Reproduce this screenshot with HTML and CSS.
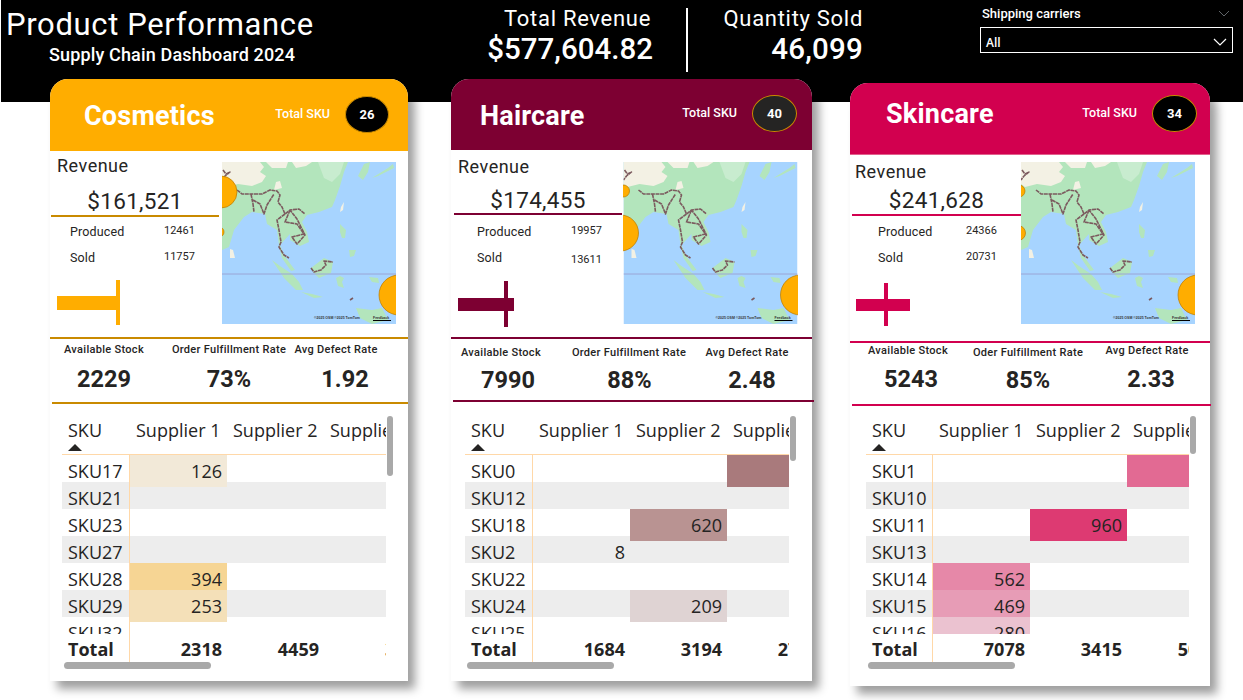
FILE: index.html
```html
<!DOCTYPE html>
<html lang="en">
<head>
  <meta charset="UTF-8">
  <meta name="viewport" content="width=device-width, initial-scale=1.0">
  <title>Product Performance</title>
  <link rel="stylesheet" href="styles.css">
</head>
<body>
  <!-- shared base map, each card adds its own bubbles on top -->
  <svg class="defs" width="0" height="0" aria-hidden="true">
    <filter id="soft"><feGaussianBlur stdDeviation="0.35"/></filter>
    <symbol id="basemap" viewBox="0 0 174 162">
      <rect width="174" height="162" fill="#a7d4ff"/>
      <g filter="url(#soft)">
        <path d="M0 0H126L122 10L118 24L113 38L110 45L97 50L85 53L80 60L85 70L87 80L78 84L68 78L68 72L58 83L62 93L67 100L73 108L69 109L60 96L57 83L55 68L45 62L43 52L30 50L22 55L12 68L7 85L0 88Z" fill="#b3e5bc"/>
        <path d="M0 0H38L42 5L38 10L44 14L40 20L30 24L16 22L4 25L0 22Z M44 0H66L64 6L50 6Z M70 0H90L84 4L74 6Z" fill="#f3f1e4"/>
        <path d="M54 20L58 19L60 26L52 28Z" fill="#f3f1e4"/>
        <path d="M96 0H122L118 12L110 20L102 16Z" fill="#c8eccf"/>
        <path d="M50 98L58 104L70 112L77 120L81 128L74 128L62 116Z M89 106L102 96L111 100L109 111L97 116L92 111Z M79 130L90 132L101 135L92 136Z M114 116L118 114L122 116L120 120L122 126L116 124Z M118 62L124 68L123 76L120 76L118 70Z M127 88L134 88L132 94L128 95Z M147 115L156 116L157 121L150 120Z M134 146L150 148L160 146L166 158L150 162L138 156Z M136 14L142 2L148 0L146 10L141 18Z M150 16L166 6L171 2L172 6L156 14Z" fill="#b3e5bc"/>
        <path d="M119 45L122 40L121 48L118 50Z M8 87L11 88L13 96L8 96Z" fill="#f3f1e4"/>
        <path d="M0 112H174" stroke="#9aa5d6" stroke-width="1"/>
        <g fill="none" stroke="#7b5a5e" stroke-width="1.600" stroke-linejoin="round" stroke-dasharray="4 0.600">
          <path d="M15 28L20 32L28 32L40 32L48 28L55 29L58 33L56 40L60 45L63 52L68 48L77 47L83 52"/>
          <path d="M29 32L31 42L32 50M31 38L38 42L42 52L45 43L52 32"/>
          <path d="M63 52L55 58L57 68L59 80L57 85L62 93L67 96"/>
          <path d="M68 48L63 60L75 62L82 72L70 75L75 82L83 73L78 63L75 57L68 48"/>
          <path d="M89 106L92 110L99 108L104 103L102 99L111 100"/>
          <path d="M1 8L4 12L8 10L3 14L0 18M128 138L131 136"/>
        </g>
      </g>
    </symbol>
  </svg>

  <header class="topbar">
    <div class="title-block">
      <h1>Product Performance</h1>
      <div class="subtitle">Supply Chain Dashboard 2024</div>
    </div>
    <div class="total total-revenue">
      <div class="total-label">Total Revenue</div>
      <div class="total-value">$577,604.82</div>
    </div>
    <div class="total total-qty">
      <div class="total-label">Quantity Sold</div>
      <div class="total-value">46,099</div>
    </div>
    <div class="slicer">
      <div class="slicer-head">
        Shipping carriers
        <svg width="12" height="7" viewBox="0 0 12 7"><path d="M1 1L6 6L11 1" fill="none" stroke="#5f6468" stroke-width="1"/></svg>
      </div>
      <div class="slicer-box">
        All
        <svg width="14" height="8" viewBox="0 0 14 8"><path d="M1 1L7 7L13 1" fill="none" stroke="#fff" stroke-width="1.2"/></svg>
      </div>
    </div>
  </header>

  <main class="cards">

    <section class="card cosmetics">
      <div class="card-head">
        <h2>Cosmetics</h2>
        <span class="sku-label">Total SKU</span>
        <span class="sku-count">26</span>
      </div>
      <div class="summary">
        <div class="summary-left">
          <div class="rev-label">Revenue</div>
          <div class="rev-value">$161,521</div>
          <div class="stat"><span>Produced</span><b>12461</b></div>
          <div class="stat"><span>Sold</span><b>11757</b></div>
          <svg class="bullet" width="66" height="46" viewBox="0 0 66 46">
            <rect x="0" y="16" width="60" height="14" fill="#ffad00"/>
            <rect x="59" y="0" width="4" height="45" fill="#ffad00"/>
          </svg>
        </div>
        <svg class="map" width="174" height="162" viewBox="0 0 174 162">
          <use href="#basemap" width="174" height="162"/>
          <circle class="bubble" cx="-1" cy="30" r="16"/>
          <circle class="bubble" cx="-3" cy="70" r="5"/>
          <circle class="bubble" cx="177" cy="133" r="20"/>
          <text class="map-credit" x="92" y="157">©2025 OSM ©2025 TomTom</text>
          <text class="map-credit" x="151" y="157">Feedback</text>
          <path d="M151 158.500H169" stroke="#000" stroke-width="1"/>
        </svg>
      </div>
      <div class="kpis">
        <div class="kpi"><div class="kpi-label">Available Stock</div><div class="kpi-value">2229</div></div>
        <div class="kpi"><div class="kpi-label">Order Fulfillment Rate</div><div class="kpi-value">73%</div></div>
        <div class="kpi"><div class="kpi-label">Avg Defect Rate</div><div class="kpi-value">1.92</div></div>
      </div>
      <div class="matrix">
        <div class="matrix-clip">
          <div class="row row-head">
            <div class="cell first">SKU<i class="sort"></i></div>
            <div class="cell">Supplier 1</div><div class="cell">Supplier 2</div><div class="cell">Supplier 3</div>
          </div>
          <div class="rows">
            <div class="row"><div class="cell first">SKU17</div><div class="cell num" style="background:#f2e9d8">126</div><div class="cell"></div><div class="cell"></div></div>
            <div class="row"><div class="cell first">SKU21</div><div class="cell"></div><div class="cell"></div><div class="cell"></div></div>
            <div class="row"><div class="cell first">SKU23</div><div class="cell"></div><div class="cell"></div><div class="cell"></div></div>
            <div class="row"><div class="cell first">SKU27</div><div class="cell"></div><div class="cell"></div><div class="cell"></div></div>
            <div class="row"><div class="cell first">SKU28</div><div class="cell num" style="background:#f6d594">394</div><div class="cell"></div><div class="cell"></div></div>
            <div class="row"><div class="cell first">SKU29</div><div class="cell num" style="background:#f4e0b8">253</div><div class="cell"></div><div class="cell"></div></div>
            <div class="row"><div class="cell first">SKU32</div><div class="cell"></div><div class="cell"></div><div class="cell"></div></div>
          </div>
          <div class="row row-total">
            <div class="cell first">Total</div><div class="cell num">2318</div><div class="cell num">4459</div><div class="cell num">367</div>
          </div>
        </div>
        <div class="scroll-v"></div>
        <div class="scroll-h"></div>
      </div>
    </section>

    <section class="card haircare">
      <div class="card-head">
        <h2>Haircare</h2>
        <span class="sku-label">Total SKU</span>
        <span class="sku-count">40</span>
      </div>
      <div class="summary">
        <div class="summary-left">
          <div class="rev-label">Revenue</div>
          <div class="rev-value">$174,455</div>
          <div class="stat"><span>Produced</span><b>19957</b></div>
          <div class="stat"><span>Sold</span><b class="low">13611</b></div>
          <svg class="bullet" width="66" height="46" viewBox="0 0 66 46">
            <rect x="0" y="17" width="56" height="13" fill="#7d0032"/>
            <rect x="46" y="0" width="4" height="46" fill="#7d0032"/>
          </svg>
        </div>
        <svg class="map" width="175" height="162" viewBox="0 0 174 162">
          <use href="#basemap" width="174" height="162"/>
          <circle class="bubble" cx="0" cy="29" r="6"/>
          <circle class="bubble" cx="-3" cy="71" r="18"/>
          <circle class="bubble" cx="177" cy="133" r="20"/>
          <text class="map-credit" x="92" y="157">©2025 OSM ©2025 TomTom</text>
          <text class="map-credit" x="151" y="157">Feedback</text>
          <path d="M151 158.500H169" stroke="#000" stroke-width="1"/>
        </svg>
      </div>
      <div class="kpis">
        <div class="kpi"><div class="kpi-label">Available Stock</div><div class="kpi-value">7990</div></div>
        <div class="kpi"><div class="kpi-label">Order Fulfillment Rate</div><div class="kpi-value">88%</div></div>
        <div class="kpi"><div class="kpi-label">Avg Defect Rate</div><div class="kpi-value">2.48</div></div>
      </div>
      <div class="matrix">
        <div class="matrix-clip">
          <div class="row row-head">
            <div class="cell first">SKU<i class="sort"></i></div>
            <div class="cell">Supplier 1</div><div class="cell">Supplier 2</div><div class="cell">Supplier 3</div>
          </div>
          <div class="rows">
            <div class="row"><div class="cell first">SKU0</div><div class="cell"></div><div class="cell"></div><div class="cell" style="background:#a97a7c"></div></div>
            <div class="row"><div class="cell first">SKU12</div><div class="cell"></div><div class="cell"></div><div class="cell"></div></div>
            <div class="row"><div class="cell first">SKU18</div><div class="cell"></div><div class="cell num" style="background:#b99392">620</div><div class="cell"></div></div>
            <div class="row"><div class="cell first">SKU2</div><div class="cell num">8</div><div class="cell"></div><div class="cell"></div></div>
            <div class="row"><div class="cell first">SKU22</div><div class="cell"></div><div class="cell"></div><div class="cell"></div></div>
            <div class="row"><div class="cell first">SKU24</div><div class="cell"></div><div class="cell num" style="background:#dfd3d3">209</div><div class="cell"></div></div>
            <div class="row"><div class="cell first">SKU25</div><div class="cell"></div><div class="cell"></div><div class="cell"></div></div>
          </div>
          <div class="row row-total">
            <div class="cell first">Total</div><div class="cell num">1684</div><div class="cell num">3194</div><div class="cell num">2748</div>
          </div>
        </div>
        <div class="scroll-v"></div>
        <div class="scroll-h"></div>
      </div>
    </section>

    <section class="card skincare">
      <div class="card-head">
        <h2>Skincare</h2>
        <span class="sku-label">Total SKU</span>
        <span class="sku-count">34</span>
      </div>
      <div class="summary">
        <div class="summary-left">
          <div class="rev-label">Revenue</div>
          <div class="rev-value">$241,628</div>
          <div class="stat"><span>Produced</span><b>24366</b></div>
          <div class="stat"><span>Sold</span><b>20731</b></div>
          <svg class="bullet" width="66" height="46" viewBox="0 0 66 46">
            <rect x="0" y="19" width="54" height="12" fill="#d2004f"/>
            <rect x="28" y="3" width="4" height="43" fill="#d2004f"/>
          </svg>
        </div>
        <svg class="map" width="174" height="162" viewBox="0 0 174 162">
          <use href="#basemap" width="174" height="162"/>
          <circle class="bubble" cx="-2" cy="29" r="6"/>
          <circle class="bubble" cx="-3" cy="71" r="7.500"/>
          <circle class="bubble" cx="177" cy="133" r="20"/>
          <text class="map-credit" x="92" y="157">©2025 OSM ©2025 TomTom</text>
          <text class="map-credit" x="151" y="157">Feedback</text>
          <path d="M151 158.500H169" stroke="#000" stroke-width="1"/>
        </svg>
      </div>
      <div class="kpis">
        <div class="kpi"><div class="kpi-label">Available Stock</div><div class="kpi-value">5243</div></div>
        <div class="kpi"><div class="kpi-label">Oder Fulfillment Rate</div><div class="kpi-value">85%</div></div>
        <div class="kpi"><div class="kpi-label">Avg Defect Rate</div><div class="kpi-value">2.33</div></div>
      </div>
      <div class="matrix">
        <div class="matrix-clip">
          <div class="row row-head">
            <div class="cell first">SKU<i class="sort"></i></div>
            <div class="cell">Supplier 1</div><div class="cell">Supplier 2</div><div class="cell">Supplier 3</div>
          </div>
          <div class="rows">
            <div class="row"><div class="cell first">SKU1</div><div class="cell"></div><div class="cell"></div><div class="cell" style="background:#e26a93"></div></div>
            <div class="row"><div class="cell first">SKU10</div><div class="cell"></div><div class="cell"></div><div class="cell"></div></div>
            <div class="row"><div class="cell first">SKU11</div><div class="cell"></div><div class="cell num" style="background:#dd3a72">960</div><div class="cell"></div></div>
            <div class="row"><div class="cell first">SKU13</div><div class="cell"></div><div class="cell"></div><div class="cell"></div></div>
            <div class="row"><div class="cell first">SKU14</div><div class="cell num" style="background:#e688a8">562</div><div class="cell"></div><div class="cell"></div></div>
            <div class="row"><div class="cell first">SKU15</div><div class="cell num" style="background:#e79cb6">469</div><div class="cell"></div><div class="cell"></div></div>
            <div class="row"><div class="cell first">SKU16</div><div class="cell num" style="background:#ebc2d0">280</div><div class="cell"></div><div class="cell"></div></div>
          </div>
          <div class="row row-total">
            <div class="cell first">Total</div><div class="cell num">7078</div><div class="cell num">3415</div><div class="cell num">5012</div>
          </div>
        </div>
        <div class="scroll-v"></div>
        <div class="scroll-h"></div>
      </div>
    </section>

  </main>
</body>
</html>
```

FILE: styles.css
```css
* {
  margin: 0;
  padding: 0;
  box-sizing: border-box;
}

body {
  font-family: 'Roboto', 'Liberation Sans', sans-serif;
  background: #fff;
  color: #252423;
  overflow: hidden;
  height: 700px;
}

.defs {
  position: absolute;
}

.map-credit {
  font-family: 'Liberation Sans', sans-serif;
  font-size: 3.500px;
  font-weight: 700;
  fill: #333;
}

/* top black band */
.topbar {
  height: 102px;
  margin-left: 1px;
  background: #000;
  color: #fff;
  display: flex;
}

.title-block {
  width: 450px;
  padding-left: 5px;
}

h1 {
  font-size: 31px;
  font-weight: 400;
  line-height: 37px;
  margin-top: 6px;
  letter-spacing: 0.65px;
}

.subtitle {
  font-size: 18px;
  font-weight: 500;
  line-height: 24px;
  padding-left: 43px;
  letter-spacing: 0.15px;
}

.total {
  text-align: right;
  height: 64px;
  margin-top: 8px;
}

.total-revenue {
  width: 237px;
  padding-right: 33px;
  border-right: 2px solid #fff;
}

.total-qty {
  width: 175px;
}

.total-label {
  font-size: 22px;
  line-height: 22px;
  letter-spacing: 0.7px;
}

.total-revenue .total-label {
  padding-right: 2px;
}

.total-value {
  font-size: 29.500px;
  font-weight: 500;
  line-height: 38px;
}

.total-qty .total-value {
  letter-spacing: 0.2px;
}

.slicer {
  width: 253px;
  margin-left: 117px;
  padding-top: 6px;
}

.slicer-head {
  display: flex;
  justify-content: space-between;
  align-items: center;
  font-size: 13px;
  font-weight: 500;
  line-height: 15px;
  padding: 0 3px 0 2px;
  margin-bottom: 6px;
}

.slicer-box {
  height: 26px;
  border: 1px solid #fff;
  font-family: 'Open Sans', sans-serif;
  font-size: 12px;
  font-weight: 600;
  display: flex;
  justify-content: space-between;
  align-items: center;
  padding: 4px 5px 0;
}

/* the three product cards, they sit over the black band */
.cards {
  display: flex;
  margin-top: -23px;
  padding-left: 50px;
  align-items: flex-start;
}

.card {
  width: 358px;
  height: 602px;
  background: #fff;
  border-radius: 18px 18px 0 0;
  box-shadow: 7px 8px 10px rgba(0, 0, 0, 0.38);
  display: flex;
  flex-direction: column;
  position: relative;
  flex: none;
}

.cosmetics {
  --accent: #ffad00;
  --rule: #c98a00;
}

.haircare {
  --accent: #7d0032;
  --rule: #7d0032;
  width: 361px;
  margin-left: 43px;
}

.skincare {
  --accent: #d2004f;
  --rule: #d2004f;
  width: 360px;
  height: 603px;
  margin-left: 38px;
  margin-top: 4px;
}

.card-head {
  height: 72px;
  flex: none;
  background: var(--accent);
  border-radius: 18px 18px 0 0;
  color: #fff;
  display: flex;
  align-items: center;
}

.card-head h2 {
  font-size: 27px;
  font-weight: 700;
  letter-spacing: 0.2px;
  margin-right: auto;
  margin-top: 2px;
}

.sku-label {
  font-size: 12.500px;
  font-weight: 500;
  margin: 0 15px 4px 0;
}

.sku-count {
  width: 44px;
  height: 37px;
  border-radius: 50%;
  background: #000;
  border: 1px solid var(--rule);
  font-size: 13px;
  font-weight: 700;
  display: flex;
  align-items: center;
  justify-content: center;
  margin-bottom: 2px;
}

.cosmetics .card-head { padding: 0 19px 0 34px; }
.haircare .card-head { height: 71px; padding: 0 15px 0 29px; }
.skincare .card-head { padding: 0 13px 0 36px; border-bottom: 1px solid #e2608c; }
.haircare .sku-count { background: #252423; width: 45px; border-color: #c98a00; }
.skincare .sku-count { width: 45px; border-color: #c98a00; margin-bottom: 10px; }
.skincare .card-head h2 { margin: 0 auto 10px 0; }
.skincare .sku-label { margin-bottom: 12px; }

/* revenue block and map */
.summary {
  flex: none;
  display: flex;
  height: 188px;
  border-bottom: 2px solid var(--rule);
}

.summary-left {
  width: 172px;
  flex: none;
}

.rev-label {
  font-size: 18px;
  line-height: 22px;
  letter-spacing: 0.5px;
  padding-left: 7px;
  margin-top: 4px;
}

.rev-value {
  font-size: 22.500px;
  line-height: 33px;
  letter-spacing: 0.3px;
  text-align: center;
  margin: 8px 3px 0 1px;
  border-bottom: 2px solid var(--rule);
  height: 32px;
}

.stat {
  display: grid;
  grid-template-columns: 94px 1fr;
  height: 26px;
  align-items: center;
  padding-left: 20px;
  font-size: 12.500px;
  font-weight: 400;
  letter-spacing: 0.15px;
}

.rev-value + .stat {
  margin-top: 1px;
}

.stat b {
  font-size: 11px;
  font-weight: 400;
  letter-spacing: 0;
  margin-top: -2px;
}

.stat b.low {
  margin-top: 4px;
}

.bullet {
  display: block;
  margin: 10px 0 0 7px;
}

.map {
  display: block;
  margin-top: 11px;
  flex: none;
}

.bubble {
  fill: #ffad00;
  stroke: #b87a00;
  stroke-width: 0.7;
}

.haircare .summary { height: 189px; }
.haircare .rev-label { margin-top: 6px; }
.haircare .rev-value { margin: 6px 1px 0 3px; height: 31px; }
.haircare .stat { padding-left: 26px; }
.haircare .rev-value + .stat { margin-top: 3px; }
.haircare .map { margin-top: 12px; }
.haircare .bullet { margin: 11px 0 0 7px; }

.skincare .rev-label { margin-top: 6px; padding-left: 5px; }
.skincare .rev-value { margin: 1px 0 0 2px; height: 32px; }
.skincare .summary-left { width: 171px; }
.skincare .stat { padding-left: 28px; grid-template-columns: 88px 1fr; }
.skincare .rev-value + .stat { margin-top: 2px; }
.skincare .map { margin-top: 7px; }
.skincare .bullet { margin: 10px 0 0 6px; }

/* kpi row */
.kpis {
  flex: none;
  display: grid;
  border-bottom: 2px solid var(--rule);
  height: 65px;
  margin-left: 2px;
  text-align: center;
  white-space: nowrap;
}

.cosmetics .kpis { grid-template-columns: 104px 146px 86px; }
.haircare .kpis { grid-template-columns: 96px 153px 90px; height: 63px; margin-right: -2px; }
.skincare .kpis { grid-template-columns: 112px 128px 118px; height: 63px; margin-right: -1px; }

.kpi-label {
  font-size: 11px;
  font-weight: 500;
  line-height: 14px;
  letter-spacing: 0.3px;
  margin-top: 4px;
}

.kpi-value {
  font-size: 23.500px;
  font-weight: 700;
  line-height: 28px;
  margin-top: 8px;
}

.cosmetics .kpi:nth-child(3) .kpi-label { margin-left: -18px; }

.haircare .kpi-label { margin-top: 7px; }
.haircare .kpi-value { margin-top: 6px; }
.haircare .kpi:nth-child(1) .kpi-value { margin-left: 14px; }
.haircare .kpi:nth-child(2) .kpi-label { margin-left: 7px; }
.haircare .kpi:nth-child(2) .kpi-value { margin-left: 8px; }
.haircare .kpi:nth-child(3) .kpi-value { margin-left: 10px; }

.skincare .kpi-label { margin-top: 1px; }
.skincare .kpi-value { margin-top: 7px; }
.skincare .kpi:nth-child(1) .kpi-value { margin-left: 6px; }
.skincare .kpi:nth-child(2) .kpi-label { margin-top: 3px; }
.skincare .kpi:nth-child(2) .kpi-value { margin-top: 6px; }
.skincare .kpi:nth-child(3) .kpi-label { margin-left: -8px; }

/* supplier matrix */
.matrix {
  margin-top: auto;
  margin-bottom: 19px;
  margin-left: 12px;
  width: 333px;
  height: 247px;
  position: relative;
  font-family: 'Open Sans', sans-serif;
}

.haircare .matrix { margin-left: 14px; }
.skincare .matrix { margin-left: 16px; margin-bottom: 24px; }

.matrix-clip {
  width: 324px;
  overflow: hidden;
}

.skincare .matrix-clip { width: 323px; }

.row {
  display: grid;
  grid-template-columns: 68px 97px 97px 97px;
  width: 359px;
  height: 27px;
  font-size: 18px;
  line-height: 32px;
}

.skincare .row { grid-template-columns: 67px 97px 97px 97px; }

.row-head {
  height: 40px;
  font-size: 18px;
  line-height: 30px;
  border-bottom: 1px solid #ffd8a8;
  white-space: nowrap;
  width: 324px;
  overflow: hidden;
}

.row-head .cell {
  padding-left: 6px;
}

.row-head .first {
  border-right: none;
}

.rows {
  height: 179px;
  overflow: hidden;
}

.rows .row:nth-child(even) {
  background: #ededed;
}

.cell {
  padding-right: 5px;
}

.num {
  text-align: right;
}

.first {
  padding-left: 6px;
  border-right: 1px solid #ffd8a8;
}

.sort {
  display: block;
  width: 0;
  height: 0;
  margin-top: -1px;
  border-left: 7px solid transparent;
  border-right: 7px solid transparent;
  border-bottom: 7px solid #252423;
}

.row-total {
  height: 28px;
  font-weight: 700;
  line-height: 31px;
}

.scroll-v {
  position: absolute;
  left: 325px;
  top: 1px;
  width: 6px;
  height: 60px;
  background: #a9a9a9;
  border-radius: 3px;
}

.haircare .scroll-v { height: 45px; }
.skincare .scroll-v { height: 38px; left: 324px; }

.scroll-h {
  position: absolute;
  left: 2px;
  top: 247px;
  width: 147px;
  height: 7px;
  background: #a9a9a9;
  border-radius: 4px;
}
```
